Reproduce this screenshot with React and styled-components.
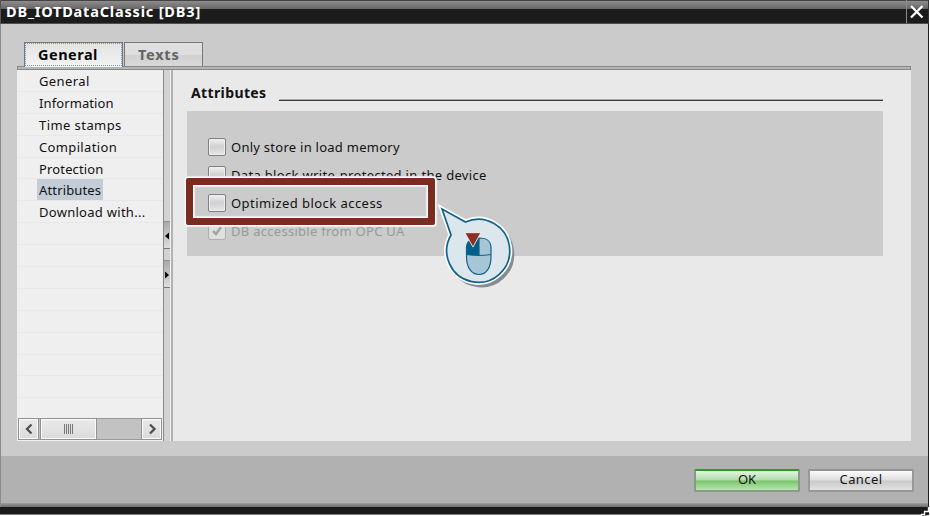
import React from "react";
import styled, { createGlobalStyle } from "styled-components";

const Global = createGlobalStyle`
  * { box-sizing: border-box; }
  body { margin: 0; background: #fff; overflow: hidden; }
`;

const Dialog = styled.div`
  position: relative;
  width: 930px;
  height: 516px;
  font-family: "Noto Sans", sans-serif;
  font-size: 13px;
  color: #111;
  display: flex;
  flex-direction: column;
  white-space: nowrap;
`;
const TitleBar = styled.header`
  display: flex;
  width: 929px;
  height: 24px;
  border-left: 1px solid #555;
  border-right: 1px solid #333;
  background: linear-gradient(#444 0 1px, #8e8c8d 1px, #666465 9px, #1c1c1c 9px 23px, #505050 23px);
`;
const Title = styled.h1`
  flex: 1;
  margin: 0;
  padding-left: 5px;
  font-size: 14.5px;
  line-height: 22px;
  font-weight: 700;
  letter-spacing: ${(p) => p.$track}px;
  color: #fff;
`;
const Close = styled.button`
  width: 22px;
  height: 23px;
  border: 0;
  border-left: 1px solid #8b8b8b;
  padding: 0;
  background: none;
  svg { display: block; }
`;
const Body = styled.main`
  width: 929px;
  height: 432px;
  padding: 18px 17px 15px 16px;
  border-left: 1px solid #8c8c8c;
  border-right: 1px solid #222;
  background: #cbcbcb;
`;
const Tabs = styled.nav`
  display: flex;
  gap: 1px;
  height: 24px;
  padding-left: 7px;
`;
const Tab = styled.button`
  position: relative;
  width: ${(p) => p.$w}px;
  height: ${(p) => (p.$on ? 25 : 24)}px;
  z-index: ${(p) => (p.$on ? 1 : 0)};
  border: 1px solid #777;
  border-bottom: 0;
  padding: 0 0 ${(p) => (p.$on ? 3 : 2)}px 13px;
  text-align: left;
  font: 700 14.5px/20px "Noto Sans", sans-serif;
  letter-spacing: ${(p) => p.$track}px;
  color: ${(p) => (p.$on ? "#080808" : "#636363")};
  background: ${(p) => (p.$on ? "linear-gradient(#e3e3e3, #f3f3f3)" : "linear-gradient(#dedede 0 50%, #d0d0d0 51%, #d8d8d8)")};
  &::after {
    content: "";
    display: ${(p) => (p.$on ? "block" : "none")};
    position: absolute;
    inset: 0 0 1px 0;
    border: 1px dotted #7b91c9;
  }
`;
const Rule = styled.div`
  height: 4px;
  border: 1px solid #888;
  background: #b5b5b5;
`;
const Panel = styled.section`
  display: flex;
  height: 371px;
  background: #e9e9e9;
`;
const Side = styled.aside`
  display: flex;
  flex-direction: column;
  width: 146px;
  background: #efefef;
`;
const List = styled.ul`
  flex: 1;
  margin: 0;
  padding: 0;
  list-style: none;
  overflow: hidden;
`;
const Item = styled.li`
  height: 21.9px;
  padding-left: 20px;
  border-bottom: 1px solid #e8e8e8;
  line-height: 22px;
`;
const ItemText = styled.span`
  display: inline-block;
  height: 21px;
  padding: 0 2px;
  letter-spacing: ${(p) => p.$track}px;
  background: ${(p) => (p.$on ? "#c3cdd8" : "transparent")};
`;
const ScrollBar = styled.div`
  display: flex;
  height: 22px;
  margin: 0 1px 1px;
  background: #c2c2c2;
  border-top: 1px solid #999;
  border-bottom: 1px solid #999;
`;
const ScrollPart = styled.div`
  width: ${(p) => p.$w}px;
  height: 22px;
  margin: -1px ${(p) => p.$gap || 0}px 0 0;
  display: flex;
  align-items: center;
  justify-content: center;
  border: 1px solid #929292;
  box-shadow: inset 0 0 0 1px #fafafa;
  background: linear-gradient(#ebebeb, #dadada);
`;
const Splitter = styled.div`
  width: 10px;
  padding-top: 151px;
  border-left: 1px solid #888;
  border-right: 2px solid #b1b1b1;
  background: linear-gradient(90deg, #d2d2d2 0 6px, #f3f3f3 6px);
`;
const Grip = styled.div`
  width: 6px;
  height: 28px;
  margin-bottom: ${(p) => p.$gap}px;
  border-top: 1px solid #929292;
  border-bottom: 1px solid #777;
  background: linear-gradient(#aaa, #ddd);
  svg { display: block; margin-top: 10px; }
`;
const Content = styled.div`
  flex: 1;
  padding: 12px 28px 0 14px;
`;
const Heading = styled.div`
  display: flex;
  height: 29px;
  padding-left: 4px;
`;
const HeadText = styled.h2`
  width: 88px;
  margin: 0;
  font-size: 14px;
  line-height: 22px;
  letter-spacing: ${(p) => p.$track}px;
`;
const HeadLine = styled.div`
  flex: 1;
  height: 2px;
  margin-top: 17px;
  border-top: 1px solid #aaa;
  border-bottom: 1px solid #3c3c3c;
`;
const Options = styled.div`
  height: 145px;
  padding: 22px 0 0 21px;
  background: #cbcbcb;
`;
const Option = styled.label`
  display: flex;
  align-items: center;
  gap: 5px;
  height: 28px;
  color: ${(p) => (p.$off ? "#999" : "#111")};
`;
const Box = styled.span`
  width: 18px;
  height: 18px;
  border: 1px solid ${(p) => (p.$off ? "#b0b0b0" : "#808080")};
  border-radius: 2px;
  box-shadow: inset 0 0 0 1px ${(p) => (p.$off ? "#ddd" : "#eee")};
  background: ${(p) => (p.$off ? "#e0e0e0" : "linear-gradient(#f0f0f0, #cfd0d2 50%, #e8e8e8)")};
  svg { display: block; }
`;
const OptionText = styled.span`
  letter-spacing: ${(p) => p.$track}px;
`;
const Footer = styled.footer`
  display: flex;
  justify-content: flex-end;
  gap: 8px;
  width: 929px;
  height: 51px;
  padding: 13px 14px 0 0;
  border-left: 1px solid #8c8c8c;
  border-right: 1px solid #222;
  background: linear-gradient(#b1b1b1 0 47px, #9e9e9e 47px, #6c6c6c 51px);
`;
const Button = styled.button`
  width: 106px;
  height: 23px;
  padding: 0 0 2px;
  border: 2px solid ${(p) => (p.$green ? "#8a9a88" : "#989898")};
  border-top-color: ${(p) => (p.$green ? "#38952e" : "#929292")};
  border-radius: 2px;
  font: 13px/17px "Noto Sans", sans-serif;
  letter-spacing: ${(p) => p.$track}px;
  color: #151515;
  background: ${(p) =>
    p.$green
      ? "linear-gradient(#e3f5e0, #b0dca9 48%, #79c56d 52%, #b7e6af)"
      : "linear-gradient(#fbfbfb, #dedede 48%, #c9c9c9 52%, #e1e1e1)"};
`;
const Bottom = styled.div`
  width: 929px;
  height: 8px;
  background: #1b1b1b;
  border-bottom: 1px solid #808080;
`;
const Highlight = styled.div`
  position: absolute;
  left: 186px;
  top: 178px;
  width: 249px;
  height: 47px;
  border: 7px solid #7b2c20;
  border-radius: 2px;
  box-shadow: 0 0 0 1px #fff, 0 0 1px 2px #eee, inset 0 0 0 1px #fff, inset 0 0 1px 2px #eee;
`;
const Pointer = styled.svg`
  position: absolute;
  left: 436px;
  top: 200px;
`;
const Corner = styled.svg`
  position: absolute;
  right: 0;
  bottom: 0;
`;

const items = [
  ["General", 0.4], ["Information", 0.1], ["Time stamps", 0.43],
  ["Compilation", 0.35], ["Protection", 0.15], ["Attributes", 0.15],
  ["Download with...", 0.28],
];
const options = [
  ["Only store in load memory", 0.26],
  ["Data block write-protected in the device", 0.33],
  ["Optimized block access", 0.45],
  ["DB accessible from OPC UA", 0.28, true],
];

const balloon = "M442 209L451 235A31.500 31.500 0 1 0 465.500 222Z";

const Chevron = ({ right }) => (
  <svg width="12" height="12" viewBox="0 0 12 12">
    <path d={right ? "M4 1.5 8.5 6 4 10.5" : "M8.5 1.5 4 6l4.5 4.5"} fill="none" stroke="#505050" strokeWidth="2.3" />
  </svg>
);
const Arrow = ({ right }) => (
  <svg width="6" height="8" viewBox="0 0 6 8">
    <path d={right ? "M1 0.5v7L5 4z" : "M5 0.5v7L1 4z"} fill="#000" />
  </svg>
);

export default function App() {
  return (
    <Dialog>
      <Global />
      <TitleBar>
        <Title $track={0.82}>DB_IOTDataClassic [DB3]</Title>
        <Close aria-label="Close">
          <svg width="21" height="23" viewBox="0 0 21 23">
            <path d="M4 6l11.500 11.500M15.500 6L4 17.500" stroke="#fff" strokeWidth="2.300" />
          </svg>
        </Close>
      </TitleBar>
      <Body>
        <Tabs>
          <Tab $on $w={99} $track={0.5}>General</Tab>
          <Tab $w={79} $track={0.75}>Texts</Tab>
        </Tabs>
        <Rule />
        <Panel>
          <Side>
            <List>
              {items.map(([t, track]) => (
                <Item key={t}><ItemText $track={track} $on={t === "Attributes"}>{t}</ItemText></Item>
              ))}
              {Array.from({ length: 8 }, (_, i) => <Item key={i} />)}
            </List>
            <ScrollBar>
              <ScrollPart $w={21} $gap={1}><Chevron /></ScrollPart>
              <ScrollPart $w={57} $gap={44}>
                <svg width="11" height="10"><path d="M1.500 0v10M3.500 0v10M5.500 0v10M7.500 0v10M9.500 0v10" stroke="#777" /></svg>
              </ScrollPart>
              <ScrollPart $w={21}><Chevron right /></ScrollPart>
            </ScrollBar>
          </Side>
          <Splitter>
            <Grip $gap={11}><Arrow /></Grip>
            <Grip $gap={0}><Arrow right /></Grip>
          </Splitter>
          <Content>
            <Heading><HeadText $track={0.38}>Attributes</HeadText><HeadLine /></Heading>
            <Options>
              {options.map(([t, track, off]) => (
                <Option key={t} $off={off}>
                  <Box $off={off}>
                    {off && <svg width="16" height="16"><path d="M4 8l3 3 5-7" fill="none" stroke="#a5a5a5" strokeWidth="2.500" /></svg>}
                  </Box>
                  <OptionText $track={track}>{t}</OptionText>
                </Option>
              ))}
            </Options>
          </Content>
        </Panel>
      </Body>
      <Footer>
        <Button $green $track={0}>OK</Button>
        <Button $track={0.4}>Cancel</Button>
      </Footer>
      <Bottom />
      <Highlight />
      <Pointer width="84" height="94" viewBox="436 200 84 94">
        <path d={balloon} fill="#858b90" stroke="#858b90" strokeWidth="3" transform="translate(3 3.500)" />
        <path d={balloon} fill="#dce7ed" stroke="#fff" strokeWidth="5" />
        <path d={balloon} fill="#dce7ed" stroke="#146187" strokeWidth="1.700" />
        <path d="M466.500 248c0-7 4-10 12.500-10s12 3 12 10v9c0 11-5 17.500-12 17.500s-12.500-6.500-12.500-17.500z" fill="#a6c5d6" />
        <path d="M466.500 255v-7c0-7 4-10 12.500-10v17z" fill="#005f8b" />
        <path d="M466.500 248c0-7 4-10 12.500-10s12 3 12 10v9c0 11-5 17.500-12 17.500s-12.500-6.500-12.500-17.500zM466.500 254.500q12 2 24.500 0M479 238v17.500" fill="none" stroke="#146187" strokeWidth="1.200" />
        <path d="M464.800 232.700h16L473 247z" fill="#8c3023" stroke="#fff" strokeWidth=".8" />
      </Pointer>
      <Corner width="10" height="10"><path d="M1 10V6h7V0h1v9z" fill="#1b1b1b" /><path d="M1.500 10V8.500h3v-3h4V1" fill="none" stroke="#fff" strokeWidth="1.300" /></Corner>
    </Dialog>
  );
}
